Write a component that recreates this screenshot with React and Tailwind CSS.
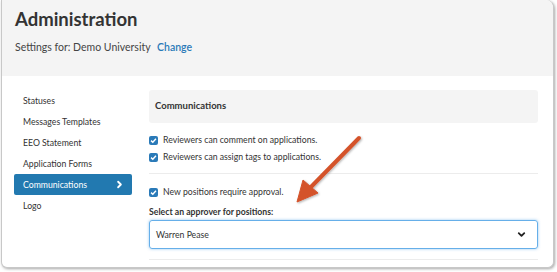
import { ChevronRight, ChevronDown } from 'lucide-react'

const NAV = ['Statuses', 'Messages Templates', 'EEO Statement', 'Application Forms', 'Communications', 'Logo']

function Check({ label }) {
  return (
    <label className="flex items-center gap-[5px] h-[16px] text-[8.7px] text-[#333]">
      <span className="w-[9px] h-[9px] rounded-[2px] bg-[#2a7ab8] flex items-center justify-center">
        <svg viewBox="0 0 10 10" className="w-[7px] h-[7px]" fill="none" stroke="white" strokeWidth={2}>
          <path d="M1.5 5.2 4 7.5 8.5 2.5" />
        </svg>
      </span>
      {label}
    </label>
  )
}

export default function App() {
  return (
    <div className="w-[557px] h-[272px] bg-white overflow-hidden relative" style={{ fontFamily: 'Lato, "Open Sans", sans-serif' }}>
      <div className="ml-[1px] w-[553px] h-[268px] border border-t-0 border-[#c8c8c8] rounded-b-[6px] rounded-tr-[8px] shadow-[1px_1px_3px_rgba(0,0,0,0.35)] overflow-hidden bg-white">
        {/* header */}
        <div className="h-[76px] bg-[#f4f4f4] px-[13px] pt-[7px]">
          <h1 className="text-[18.5px] leading-[24px] font-bold text-[#333]">Administration</h1>
          <p className="mt-[9px] text-[10.5px] leading-[14px] text-[#444]">
            Settings for: Demo University <a className="ml-[4px] text-[#2a7ab8] font-semibold">Change</a>
          </p>
        </div>

        <div className="flex pl-[12px] pt-[14px]">
          {/* sidebar */}
          <ul className="w-[118px] shrink-0">
            {NAV.map(n => (
              <li
                key={n}
                className={`h-[21px] pl-[9px] pr-[7px] flex items-center justify-between text-[8.7px] rounded-[2px] ${
                  n === 'Communications' ? 'bg-[#2279b0] text-white' : 'text-[#333]'
                }`}
              >
                {n}
                {n === 'Communications' && <ChevronRight className="w-[11px] h-[11px]" strokeWidth={4} />}
              </li>
            ))}
          </ul>

          {/* content */}
          <div className="ml-[17px] w-[389px]">
            <div className="h-[33px] rounded-[3px] bg-[#f4f4f4] flex items-center px-[6px] text-[9.5px] font-bold text-[#333]">
              Communications
            </div>
            <div className="pt-[9px] pb-[8px] flex flex-col gap-[1px]">
              <Check label="Reviewers can comment on applications." />
              <Check label="Reviewers can assign tags to applications." />
            </div>
            <div className="border-t border-[#ececec] pt-[10px]">
              <Check label="New positions require approval." />
              <p className="mt-[5px] text-[8.7px] font-bold text-[#333] leading-[13px]">Select an approver for positions:</p>
              <div className="mt-[2px] h-[29px] border border-[#66afe9] rounded-[3px] shadow-[0_0_3px_rgba(102,175,233,0.7)] flex items-center justify-between pl-[6px] pr-[10px] text-[8.7px] text-[#333]">
                Warren Pease
                <ChevronDown className="w-[11px] h-[11px] text-[#222]" strokeWidth={4} />
              </div>
              <div className="mt-[10px] border-t border-[#ececec]" />
            </div>
          </div>
        </div>
      </div>

      {/* annotation arrow */}
      <svg className="absolute left-0 top-0 pointer-events-none" width="557" height="272">
        <defs>
          <filter id="sh" x="-20%" y="-20%" width="140%" height="140%">
            <feDropShadow dx="1" dy="1" stdDeviation="1" floodColor="#000" floodOpacity="0.3" />
          </filter>
        </defs>
        <g filter="url(#sh)" fill="#d4532c" stroke="#d4532c">
          <line x1="359" y1="138" x2="309" y2="189" strokeWidth="4" strokeLinecap="round" />
          <polygon points="297,202 303,180 318,193" strokeWidth="1" strokeLinejoin="round" />
        </g>
      </svg>
    </div>
  )
}
